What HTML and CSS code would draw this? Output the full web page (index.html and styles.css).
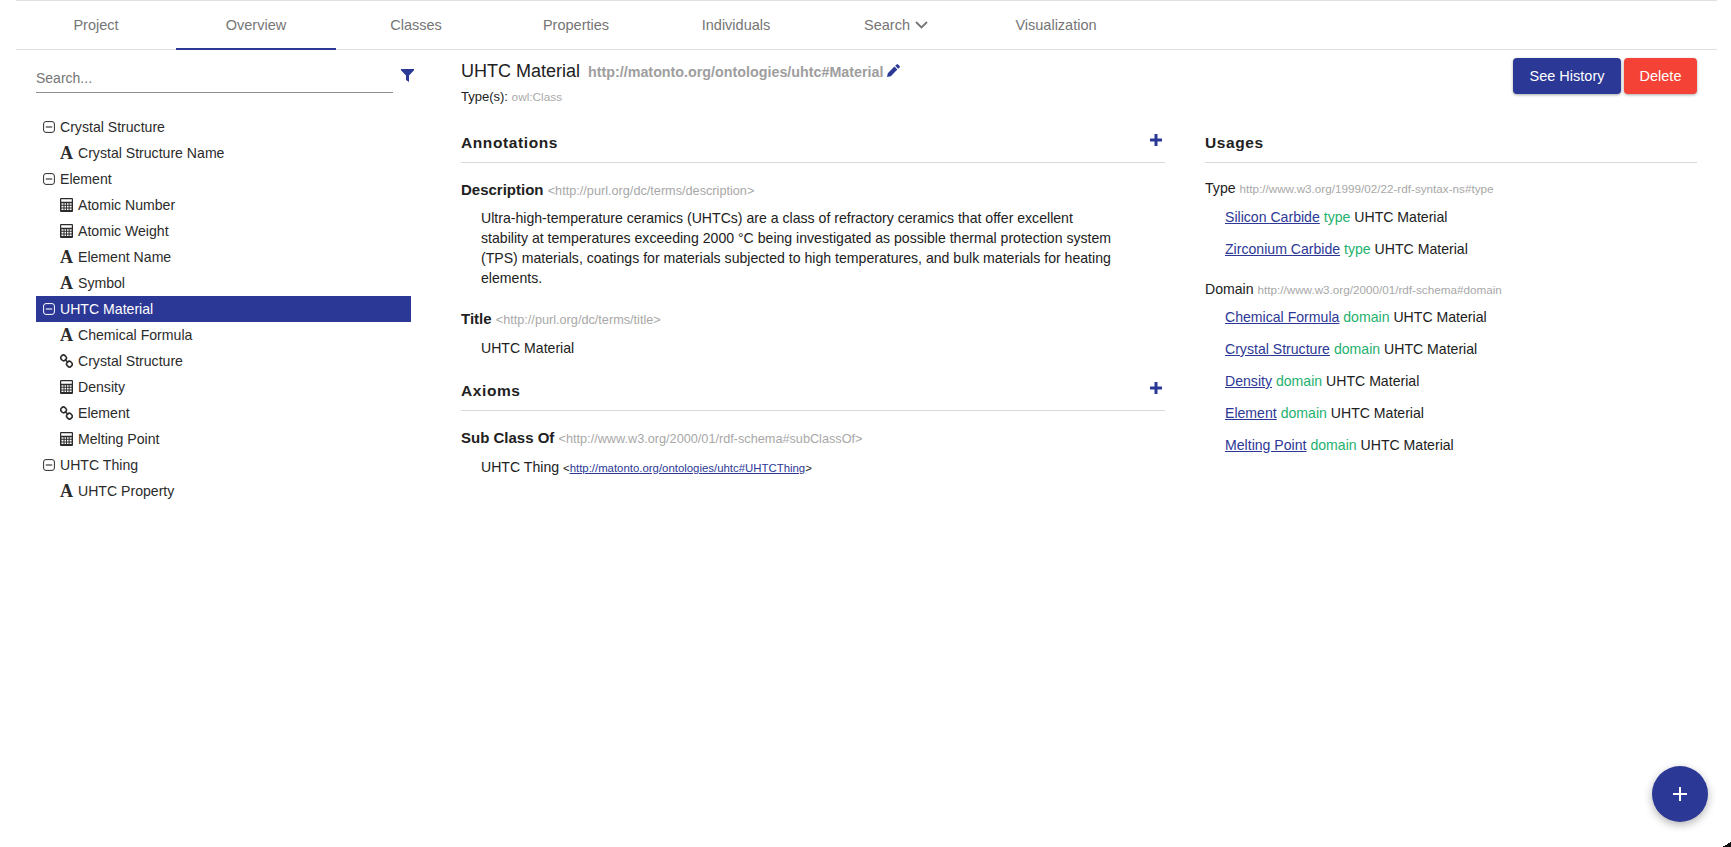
FILE: index.html
```html
<!DOCTYPE html>
<html lang="en">
<head>
    <meta charset="UTF-8">
    <title>Ontology Editor - UHTC Material</title>
    <link rel="stylesheet" href="styles.css">
</head>
<body>
    <svg class="defs" width="0" height="0">
        <symbol id="i-minus" viewBox="0 0 12 12">
            <rect x="0.6" y="0.6" width="10.8" height="10.8" rx="2.4" fill="none" stroke="currentColor" stroke-width="1"/>
            <path d="M2.8 6h6.4" stroke="currentColor" stroke-width="1.1"/>
        </symbol>
        <symbol id="i-calc" viewBox="0 0 13 14">
            <path fill-rule="evenodd" d="M1 0h11a1 1 0 0 1 1 1v12a1 1 0 0 1-1 1H1a1 1 0 0 1-1-1V1a1 1 0 0 1 1-1zM1.2 1.2v2.6h10.6V1.2zM1.5 5.2v1.6h2V5.2zM4.5 5.2v1.6h1.6V5.2zM7 5.2v1.6h1.6V5.2zM9.6 5.2v1.6h2V5.2zM1.5 7.8v1.6h2V7.8zM4.5 7.8v1.6h1.6V7.8zM7 7.8v1.6h1.6V7.8zM9.6 7.8v1.6h2V7.8zM1.5 10.4v1.6h2v-1.6zM4.5 10.4v1.6h1.6v-1.6zM7 10.4v1.6h1.6v-1.6zM9.6 10.4v1.6h2v-1.6z" fill="currentColor"/>
        </symbol>
        <symbol id="i-link" viewBox="0 0 13 13">
            <rect x="0.8" y="0.8" width="5.6" height="5.2" rx="2.5" transform="rotate(45 3.6 3.4)" fill="none" stroke="currentColor" stroke-width="1.6"/>
            <rect x="6.6" y="7" width="5.6" height="5.2" rx="2.5" transform="rotate(45 9.4 9.6)" fill="none" stroke="currentColor" stroke-width="1.6"/>
            <path d="M4.8 4.8l3.4 3.4" stroke="currentColor" stroke-width="1.6"/>
        </symbol>
    </svg>

    <div class="page">
        <nav class="tabs">
            <a class="tab">Project</a>
            <a class="tab active">Overview</a>
            <a class="tab">Classes</a>
            <a class="tab">Properties</a>
            <a class="tab">Individuals</a>
            <a class="tab">Search
                <svg class="chevron" width="13" height="8" viewBox="0 0 13 8"><path d="M1 1l5.5 5.5L12 1" fill="none" stroke="currentColor" stroke-width="1.8"/></svg>
            </a>
            <a class="tab">Visualization</a>
        </nav>

        <div class="layout">
            <aside class="sidebar">
                <div class="search-row">
                    <div class="search">Search...</div>
                    <svg class="filter" width="13" height="13" viewBox="0 0 13 13"><path d="M0 0h13v1.2L8 6.4V13L5 11V6.4L0 1.2z" fill="currentColor"/></svg>
                </div>
                <ul class="tree">
                    <li class="node"><svg class="ic-minus"><use href="#i-minus"/></svg>Crystal Structure</li>
                    <li class="node child"><span class="ic-text">A</span>Crystal Structure Name</li>
                    <li class="node"><svg class="ic-minus"><use href="#i-minus"/></svg>Element</li>
                    <li class="node child"><svg class="ic"><use href="#i-calc"/></svg>Atomic Number</li>
                    <li class="node child"><svg class="ic"><use href="#i-calc"/></svg>Atomic Weight</li>
                    <li class="node child"><span class="ic-text">A</span>Element Name</li>
                    <li class="node child"><span class="ic-text">A</span>Symbol</li>
                    <li class="node selected"><svg class="ic-minus"><use href="#i-minus"/></svg>UHTC Material</li>
                    <li class="node child"><span class="ic-text">A</span>Chemical Formula</li>
                    <li class="node child"><svg class="ic"><use href="#i-link"/></svg>Crystal Structure</li>
                    <li class="node child"><svg class="ic"><use href="#i-calc"/></svg>Density</li>
                    <li class="node child"><svg class="ic"><use href="#i-link"/></svg>Element</li>
                    <li class="node child"><svg class="ic"><use href="#i-calc"/></svg>Melting Point</li>
                    <li class="node"><svg class="ic-minus"><use href="#i-minus"/></svg>UHTC Thing</li>
                    <li class="node child"><span class="ic-text">A</span>UHTC Property</li>
                </ul>
            </aside>

            <main class="main">
                <header class="entity">
                    <div>
                        <div class="entity-title">
                            <span class="entity-name">UHTC Material</span>
                            <span class="entity-iri">http://matonto.org/ontologies/uhtc#Material</span>
                            <svg class="pencil" width="13" height="13" viewBox="0 0 13 13"><path d="M9.6.4a1 1 0 0 1 1.4 0l1.6 1.6a1 1 0 0 1 0 1.4l-1.4 1.4-3-3zM7.4 2.6l3 3-6.6 6.6-3.8.8.8-3.8z" fill="currentColor"/></svg>
                        </div>
                        <div class="entity-types">Type(s): <span class="muted">owl:Class</span></div>
                    </div>
                    <div class="actions">
                        <button class="btn btn-primary">See History</button>
                        <button class="btn btn-danger">Delete</button>
                    </div>
                </header>

                <div class="columns">
                    <div class="col-left">
                        <section>
                            <div class="section-head">
                                <h2>Annotations</h2>
                                <svg class="add" width="12" height="12" viewBox="0 0 12 12"><path d="M6 0v12M0 6h12" stroke="currentColor" stroke-width="3"/></svg>
                            </div>
                            <div class="prop">
                                <h3>Description <span class="iri">&lt;http://purl.org/dc/terms/description&gt;</span></h3>
                                <p class="value long">Ultra-high-temperature ceramics (UHTCs) are a class of refractory ceramics that offer excellent stability at temperatures exceeding 2000 °C being investigated as possible thermal protection system (TPS) materials, coatings for materials subjected to high temperatures, and bulk materials for heating elements.</p>
                            </div>
                            <div class="prop">
                                <h3>Title <span class="iri">&lt;http://purl.org/dc/terms/title&gt;</span></h3>
                                <p class="value">UHTC Material</p>
                            </div>
                        </section>
                        <section class="axioms">
                            <div class="section-head">
                                <h2>Axioms</h2>
                                <svg class="add" width="12" height="12" viewBox="0 0 12 12"><path d="M6 0v12M0 6h12" stroke="currentColor" stroke-width="3"/></svg>
                            </div>
                            <div class="prop">
                                <h3>Sub Class Of <span class="iri">&lt;http://www.w3.org/2000/01/rdf-schema#subClassOf&gt;</span></h3>
                                <p class="value">UHTC Thing <span class="small">&lt;<a href="#">http://matonto.org/ontologies/uhtc#UHTCThing</a>&gt;</span></p>
                            </div>
                        </section>
                    </div>

                    <div class="col-right">
                        <div class="section-head">
                            <h2>Usages</h2>
                        </div>
                        <div class="usage">
                            <h4>Type <span class="iri">http://www.w3.org/1999/02/22-rdf-syntax-ns#type</span></h4>
                            <p class="triple"><a href="#">Silicon Carbide</a> <span class="pred">type</span> UHTC Material</p>
                            <p class="triple"><a href="#">Zirconium Carbide</a> <span class="pred">type</span> UHTC Material</p>
                        </div>
                        <div class="usage">
                            <h4>Domain <span class="iri">http://www.w3.org/2000/01/rdf-schema#domain</span></h4>
                            <p class="triple"><a href="#">Chemical Formula</a> <span class="pred">domain</span> UHTC Material</p>
                            <p class="triple"><a href="#">Crystal Structure</a> <span class="pred">domain</span> UHTC Material</p>
                            <p class="triple"><a href="#">Density</a> <span class="pred">domain</span> UHTC Material</p>
                            <p class="triple"><a href="#">Element</a> <span class="pred">domain</span> UHTC Material</p>
                            <p class="triple"><a href="#">Melting Point</a> <span class="pred">domain</span> UHTC Material</p>
                        </div>
                    </div>
                </div>
            </main>
        </div>
    </div>

    <button class="fab"><svg width="14" height="14" viewBox="0 0 14 14"><path d="M7 0v14M0 7h14" stroke="#fff" stroke-width="2"/></svg></button>
    <div class="window-corner"></div>
</body>
</html>
```

FILE: styles.css
```css
* {
    box-sizing: border-box;
}
html, body {
    height: 100%;
}
body {
    margin: 0;
    font-family: "Liberation Sans", Arial, sans-serif;
    font-size: 14.1px;
    color: #212121;
    background: #fff;
    overflow: hidden;
}
.defs {
    position: absolute;
}
.page {
    margin: 0 14px 0 16px;
}
h2, h3, h4, p, ul {
    margin: 0;
    padding: 0;
}
a {
    color: #2c3896;
}

/* tabs */
.tabs {
    display: flex;
    height: 50px;
    border-top: 1px solid #e0e0e0;
    border-bottom: 1px solid #e0e0e0;
}
.tab {
    display: flex;
    align-items: center;
    justify-content: center;
    gap: 5px;
    width: 160px;
    font-size: 14.5px;
    color: #757575;
    border-bottom: 2px solid transparent;
    margin-bottom: -1px;
}
.tab.active {
    border-bottom-color: #2c3896;
}
.chevron {
    margin-top: 1px;
}

.layout {
    display: flex;
}

/* left tree */
.sidebar {
    width: 395px;
    padding-left: 20px;
    flex-shrink: 0;
}
.search-row {
    display: flex;
    margin-top: 14px;
    height: 50px;
}
.search {
    flex-shrink: 0;
    width: 357px;
    height: 29px;
    line-height: 28px;
    font-size: 14px;
    color: #757575;
    border-bottom: 1px solid #8f8f8f;
}
.filter {
    flex-shrink: 0;
    margin: 5px 0 0 8px;
    color: #2c3896;
}
.tree {
    list-style: none;
}
.node {
    display: flex;
    align-items: center;
    width: 375px;
    height: 26px;
    padding-left: 7px;
    color: #2b2b2b;
}
.node.child {
    padding-left: 24px;
}
.node.selected {
    background: #2c3896;
    color: #fff;
}
.ic-minus {
    width: 12px;
    height: 12px;
    margin-right: 5px;
}
.ic {
    width: 13px;
    height: 14px;
    margin-right: 5px;
}
.ic-text {
    width: 13px;
    margin-right: 5px;
    font-family: "Liberation Serif", serif;
    font-weight: bold;
    font-size: 18px;
    text-align: center;
    line-height: 14px;
}

/* right part */
.main {
    width: 1236px;
    margin-left: 50px;
}
.entity {
    display: flex;
    justify-content: space-between;
    height: 72px;
    padding-top: 8px;
}
.entity-title {
    display: flex;
    align-items: baseline;
    margin-top: 1px;
    height: 24px;
}
.entity-name {
    font-size: 18px;
    line-height: 24px;
    margin-right: 8px;
}
.entity-iri {
    font-size: 14.3px;
    font-weight: bold;
    color: #9e9e9e;
}
.pencil {
    margin-left: 4px;
    color: #2c3896;
}
.entity-types {
    margin-top: 5px;
    font-size: 13px;
    line-height: 18px;
}
.muted {
    font-size: 11.8px;
    color: #aaa;
}
.actions {
    display: flex;
    gap: 3px;
}
.btn {
    height: 36px;
    padding: 0;
    border: none;
    border-radius: 4px;
    color: #fff;
    font: 14.5px "Liberation Sans", Arial, sans-serif;
    box-shadow: 0 1px 3px rgba(0, 0, 0, 0.35);
}
.btn-primary {
    width: 108px;
    background: #2c3896;
}
.btn-danger {
    width: 73px;
    background: #f44336;
}
.columns {
    display: flex;
    gap: 40px;
}
.col-left {
    width: 704px;
}
.col-right {
    width: 492px;
}
.section-head {
    display: flex;
    justify-content: space-between;
    height: 41px;
    padding-top: 9px;
    border-bottom: 1px solid #d8d8d8;
}
.section-head h2 {
    font-size: 15.5px;
    line-height: 24px;
    letter-spacing: 0.6px;
}
.add {
    margin: 3px 3px 0 0;
    color: #2c3896;
}
.prop {
    margin-top: 16px;
}
.prop + .prop {
    margin-top: 20px;
}
.prop h3 {
    font-size: 15px;
    line-height: 22px;
}
.iri {
    font-size: 12.7px;
    font-weight: normal;
    color: #a8a8a8;
}
.value {
    width: 660px;
    margin-top: 7px;
    padding-left: 20px;
    line-height: 20px;
}
.value.long {
    margin-top: 6px;
}
.axioms {
    margin-top: 12px;
}
.small {
    font-size: 11.4px;
}
.usage {
    margin-top: 15px;
}
.usage + .usage {
    margin-top: 20px;
}
.usage h4 {
    font-size: 14.1px;
    font-weight: normal;
    line-height: 20px;
}
.usage .iri {
    font-size: 11.7px;
}
.triple {
    margin: 12px 0 0 20px;
    line-height: 20px;
}
.usage h4 + .triple {
    margin-top: 8px;
}
.usage + .usage h4 + .triple {
    margin-top: 7px;
}
.pred {
    color: #1eb16e;
}

/* floating button */
.fab {
    position: absolute;
    left: 1652px;
    top: 766px;
    display: flex;
    align-items: center;
    justify-content: center;
    width: 56px;
    height: 56px;
    padding: 0;
    border: none;
    border-radius: 50%;
    background: #2c3896;
    box-shadow: 0 3px 8px rgba(0, 0, 0, 0.3);
}
.window-corner {
    position: absolute;
    right: 0;
    bottom: 0;
    width: 9px;
    height: 5px;
    background: linear-gradient(to bottom right, transparent 50%, #111 50%);
}
```
